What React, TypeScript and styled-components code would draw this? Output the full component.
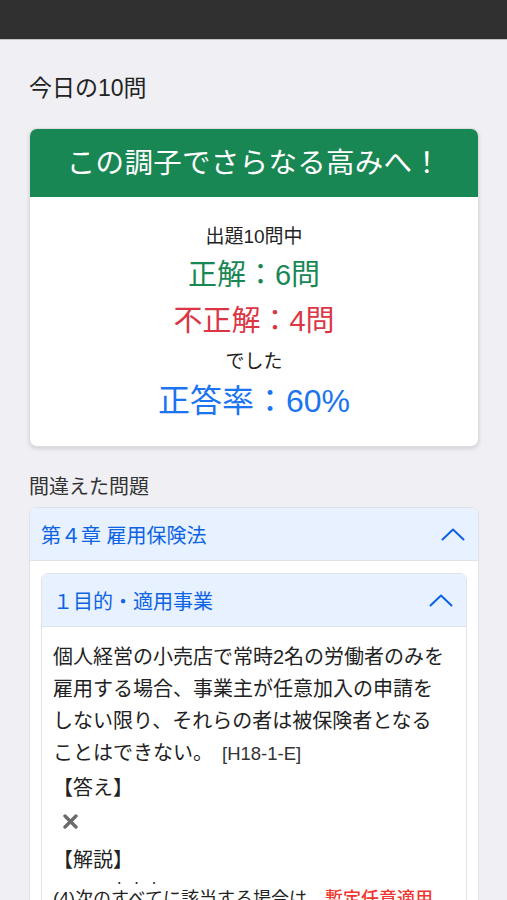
import React from "react";
import styled, { createGlobalStyle } from "styled-components";

const FONT = `"Liberation Sans", "Noto Sans CJK JP", sans-serif`;

const GlobalStyle = createGlobalStyle`
  html, body {
    margin: 0;
    padding: 0;
    background: #efeff4;
  }
  body {
    font-family: ${FONT};
    color: #222;
    -webkit-font-smoothing: antialiased;
  }
`;

const ChevronUp = () => (
  <svg width="24" height="13" viewBox="0 0 24 13" fill="none">
    <polyline
      points="1.5,11.5 12,1.5 22.5,11.5"
      stroke="#0c63e4"
      strokeWidth="2"
      strokeLinecap="round"
      strokeLinejoin="round"
    />
  </svg>
);

const CrossIcon = () => (
  <svg width="15" height="15" viewBox="0 0 15 15">
    <path
      d="M2 2 L13 13 M13 2 L2 13"
      stroke="#6b6b6b"
      strokeWidth="3.4"
      strokeLinecap="round"
    />
  </svg>
);

export default function App() {
  return (
    <>
      <GlobalStyle />
      <TopBar />
      <Page>
        <PageTitle>今日の10問</PageTitle>

        <ResultCard>
          <ResultHeader>この調子でさらなる高みへ！</ResultHeader>
          <ResultBody>
            <SmallLine>出題10問中</SmallLine>
            <ScoreLine tone="#198754">正解：6問</ScoreLine>
            <ScoreLine tone="#dc3545">不正解：4問</ScoreLine>
            <SmallLine spaced>でした</SmallLine>
            <RateLine>正答率：60%</RateLine>
          </ResultBody>
        </ResultCard>

        <SectionLabel>間違えた問題</SectionLabel>

        <Accordion>
          <AccordionHeader>
            <span>第４章 雇用保険法</span>
            <ChevronUp />
          </AccordionHeader>
          <OuterBody>
            <Accordion>
              <AccordionHeader>
                <span>１目的・適用事業</span>
                <ChevronUp />
              </AccordionHeader>
              <QuestionBody>
                <Question>
                  個人経営の小売店で常時2名の労働者のみを雇用する場合、事業主が任意加入の申請をしない限り、それらの者は被保険者となることはできない。
                  <Source>[H18-1-E]</Source>
                </Question>
                <Label>【答え】</Label>
                <AnswerMark>
                  <CrossIcon />
                </AnswerMark>
                <Label spaced>【解説】</Label>
                <Explanation>
                  (4)次の<Emphasis>すべて</Emphasis>に該当する場合は、
                  <Highlight>暫定任意適用事業</Highlight>となる。
                </Explanation>
              </QuestionBody>
            </Accordion>
          </OuterBody>
        </Accordion>
      </Page>
    </>
  );
}

const TopBar = styled.div`
  height: 39px;
  background: #303030;
  border-bottom: 1px solid #c4c4c8;
`;

const Page = styled.main`
  padding: 31px 28px 40px 29px;
  height: 900px;
  box-sizing: border-box;
  overflow: hidden;
`;

const PageTitle = styled.h1`
  margin: 0;
  font-size: 23px;
  font-weight: 400;
  line-height: 34px;
  color: #222;
`;

const ResultCard = styled.section`
  margin-top: 23px;
  background: #fff;
  border: 1px solid #dcdce0;
  border-radius: 8px;
  overflow: hidden;
  box-shadow: 0 2px 4px rgba(0, 0, 0, 0.12);
`;

const ResultHeader = styled.div`
  background: #198754;
  color: #fff;
  font-size: 28.5px;
  line-height: 44px;
  padding: 12px 0 12px;
  text-align: center;
  letter-spacing: 0.3px;
`;

const ResultBody = styled.div`
  padding: 25px 0 21px;
  display: flex;
  flex-direction: column;
  align-items: center;
`;

const SmallLine = styled.div<{ spaced?: boolean }>`
  margin-top: ${(p) => (p.spaced ? "3px" : "0")};
  font-size: 19px;
  line-height: 30px;
  color: #222;
`;

const ScoreLine = styled.div<{ tone: string }>`
  font-size: 29px;
  line-height: 46px;
  color: ${(p) => p.tone};
`;

const RateLine = styled.div`
  font-size: 32px;
  line-height: 48px;
  color: #1b74f0;
`;

const SectionLabel = styled.h2`
  margin: 24px 0 4px;
  font-size: 20px;
  font-weight: 400;
  line-height: 32px;
  color: #333;
`;

const Accordion = styled.div`
  background: #fff;
  border: 1px solid #dfe3e8;
  border-radius: 7px;
  overflow: hidden;
`;

const AccordionHeader = styled.div`
  display: flex;
  align-items: center;
  justify-content: space-between;
  height: 52px;
  padding: 0 13px 0 11px;
  background: #e7f1ff;
  border-bottom: 1px solid #dfe3e8;
  color: #0c63e4;
  font-size: 20px;
`;

const OuterBody = styled.div`
  padding: 12px 11px 12px;
`;

const QuestionBody = styled.div`
  padding: 14px 16px 0 11px;
  font-size: 20px;
  line-height: 32px;
  color: #222;
`;

const Question = styled.p`
  margin: 0;
`;

const Source = styled.span`
  font-size: 18.5px;
  margin-left: 9px;
  color: #333;
`;

const Label = styled.div<{ spaced?: boolean }>`
  margin-top: ${(p) => (p.spaced ? "6px" : "2px")};
  line-height: 32px;
`;

const AnswerMark = styled.div`
  display: flex;
  align-items: center;
  height: 34px;
  padding-left: 10px;
  margin-bottom: 2px;
`;

const Explanation = styled.p`
  margin: 0;
  font-size: 18px;
  line-height: 34px;
`;

const Emphasis = styled.span`
  -webkit-text-emphasis: "・";
  text-emphasis: "・";
  -webkit-text-emphasis-position: over;
  text-emphasis-position: over;
`;

const Highlight = styled.span`
  color: #f0362e;
  font-weight: 500;
`;
